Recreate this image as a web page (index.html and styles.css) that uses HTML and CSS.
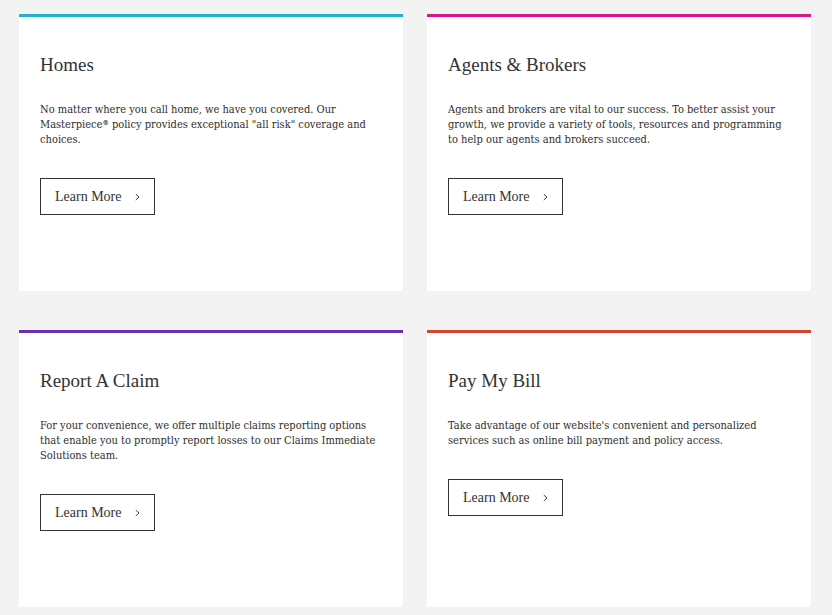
FILE: index.html
```html
<!DOCTYPE html>
<html lang="en">
<head>
<meta charset="utf-8">
<title>Cards</title>
<link rel="stylesheet" href="styles.css">
</head>
<body>
<main class="grid">
  <section class="card card-teal">
    <h2 class="card-title">Homes</h2>
    <p class="card-text">No matter where you call home, we have you covered. Our Masterpiece<span class="reg">®</span> policy provides exceptional "all risk" coverage and choices.</p>
    <a class="btn" href="#"><span>Learn More</span><svg class="chev" width="5" height="8" viewBox="0 0 5 8"><polyline points="0.8,1 4,4 0.8,7" fill="none" stroke="#444" stroke-width="1"/></svg></a>
  </section>
  <section class="card card-magenta">
    <h2 class="card-title">Agents &amp; Brokers</h2>
    <p class="card-text">Agents and brokers are vital to our success. To better assist your growth, we provide a variety of tools, resources and programming to help our agents and brokers succeed.</p>
    <a class="btn" href="#"><span>Learn More</span><svg class="chev" width="5" height="8" viewBox="0 0 5 8"><polyline points="0.8,1 4,4 0.8,7" fill="none" stroke="#444" stroke-width="1"/></svg></a>
  </section>
  <section class="card card-purple">
    <h2 class="card-title">Report A Claim</h2>
    <p class="card-text">For your convenience, we offer multiple claims reporting options that enable you to promptly report losses to our Claims Immediate Solutions team.</p>
    <a class="btn" href="#"><span>Learn More</span><svg class="chev" width="5" height="8" viewBox="0 0 5 8"><polyline points="0.8,1 4,4 0.8,7" fill="none" stroke="#444" stroke-width="1"/></svg></a>
  </section>
  <section class="card card-red">
    <h2 class="card-title">Pay My Bill</h2>
    <p class="card-text">Take advantage of our website's convenient and personalized services such as online bill payment and policy access.</p>
    <a class="btn" href="#"><span>Learn More</span><svg class="chev" width="5" height="8" viewBox="0 0 5 8"><polyline points="0.8,1 4,4 0.8,7" fill="none" stroke="#444" stroke-width="1"/></svg></a>
  </section>
</main>
</body>
</html>
```
FILE: styles.css
```css
html, body {
  margin: 0;
  padding: 0;
  background: #f3f3f3;
}
body {
  font-family: "DejaVu Serif Condensed", "DejaVu Serif", serif;
  color: #333;
}
.grid {
  display: grid;
  grid-template-columns: 384px 384px;
  grid-auto-rows: 277px;
  column-gap: 24px;
  row-gap: 39px;
  padding: 14px 21px 0 19px;
}
.card {
  background: #fff;
  border-top: 3px solid #ccc;
  padding: 36px 20px 0 21px;
  box-sizing: border-box;
}
.card-teal { border-top-color: #21b3cc; }
.card-magenta { border-top-color: #d6178c; }
.card-purple { border-top-color: #6a2eae; }
.card-red { border-top-color: #d3432f; }
.card-title {
  margin: 0;
  font-family: "Liberation Serif", serif;
  font-weight: normal;
  font-size: 19px;
  line-height: 24px;
  color: #333;
}
.card-text {
  margin: 25px 0 0;
  font-size: 11px;
  line-height: 15px;
  color: #2e2e2e;
}
.reg {
  font-size: 7px;
  font-weight: bold;
  vertical-align: top;
  line-height: 11px;
}
.btn {
  margin-top: 31px;
  display: inline-flex;
  align-items: center;
  gap: 14px;
  box-sizing: border-box;
  height: 37px;
  width: 115px;
  padding: 0 14px;
  border: 1px solid #333;
  font-family: "Liberation Serif", serif;
  font-size: 14px;
  color: #333;
  text-decoration: none;
  white-space: nowrap;
}
.chev {
  display: block;
  flex: none;
}
```
